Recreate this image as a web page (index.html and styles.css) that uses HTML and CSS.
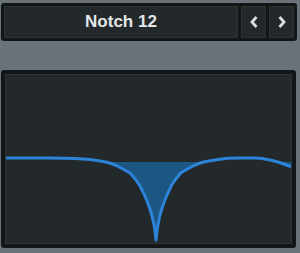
FILE: index.html
```html
<!DOCTYPE html>
<html>
<head>
<meta charset="utf-8">
<link rel="stylesheet" href="styles.css">
</head>
<body>
<div class="app">
  <div class="header">
    <div class="name">Notch 12</div>
    <div class="btn">
      <svg class="chev" width="10" height="14" viewBox="0 0 10 14"><polyline points="7.5,2 3,7 7.5,12"/></svg>
    </div>
    <div class="btn">
      <svg class="chev" width="10" height="14" viewBox="0 0 10 14"><polyline points="2.5,2 7,7 2.5,12"/></svg>
    </div>
  </div>
  <div class="panel">
    <div class="graph">
      <svg class="curve" width="285" height="168" viewBox="6 75 285 168">
        <defs>
          <clipPath id="below">
            <rect x="0" y="162" width="300" height="100"/>
          </clipPath>
        </defs>
        <path class="fill" clip-path="url(#below)" d="M5,162 L5,158 L50,158 L75,158.5 L90,159.5 L100,161 L108,162.5 L115,165 L122,168.5 L130,173 L136,180 L140,186 L144,194 L147,201 L150,209 L152,216 L154,225 L155,231 L156,240 L157,231 L157.9,225 L159.8,216 L161.7,209 L164.6,201 L167.4,194 L171.2,186 L175,180 L180.7,173 L188.3,168.5 L195,165 L201.6,162.5 L209,161 L218,159.5 L228,158.3 L238,158 L255,158 L262,158.5 L270,160 L278,162 L285,164.5 L293,167.3 L293,162 Z"/>
        <path class="line" d="M4,158 L50,158 L75,158.5 L90,159.5 L100,161 L108,162.5 L115,165 L122,168.5 L130,173 L136,180 L140,186 L144,194 L147,201 L150,209 L152,216 L154,225 L155,231 L156,240 L157,231 L157.9,225 L159.8,216 L161.7,209 L164.6,201 L167.4,194 L171.2,186 L175,180 L180.7,173 L188.3,168.5 L195,165 L201.6,162.5 L209,161 L218,159.5 L228,158.3 L238,158 L255,158 L262,158.5 L270,160 L278,162 L285,164.5 L293,167.3"/>
      </svg>
    </div>
  </div>
</div>
</body>
</html>
```

FILE: styles.css
```css
html, body {
  margin: 0;
  padding: 0;
  background: #6a737a;
}

.app {
  padding: 3px 0 0 1px;
  width: 296px;
}

.header {
  box-sizing: border-box;
  width: 296px;
  height: 38px;
  padding: 3px;
  display: flex;
  gap: 3px;
  background: #131617;
  border-radius: 3px;
}

.name {
  flex: 1;
  box-sizing: border-box;
  background: #23282b;
  border: 1px solid #2c3235;
  display: flex;
  align-items: center;
  justify-content: center;
  font-family: "Liberation Sans", Arial, sans-serif;
  font-weight: bold;
  font-size: 17px;
  color: #e4e7e8;
  padding-bottom: 1px;
}

.btn {
  width: 25px;
  box-sizing: border-box;
  background: #23282b;
  border: 1px solid #2c3235;
  display: flex;
  align-items: center;
  justify-content: center;
  padding-bottom: 1px;
}

.chev polyline {
  fill: none;
  stroke: #dadee0;
  stroke-width: 2.8;
  stroke-linejoin: miter;
  stroke-linecap: butt;
}

.panel {
  box-sizing: border-box;
  margin-top: 29px;
  width: 295px;
  height: 178px;
  padding: 4px;
  background: #131618;
  border-radius: 3px;
}

.graph {
  box-sizing: border-box;
  width: 100%;
  height: 100%;
  background: #23282b;
  border: 1px solid #2d3336;
  overflow: hidden;
}

.curve {
  display: block;
}

.fill {
  fill: #1c5784;
}

.line {
  fill: none;
  stroke: #2c83d8;
  stroke-width: 3;
  stroke-linejoin: round;
  stroke-linecap: round;
}
```
